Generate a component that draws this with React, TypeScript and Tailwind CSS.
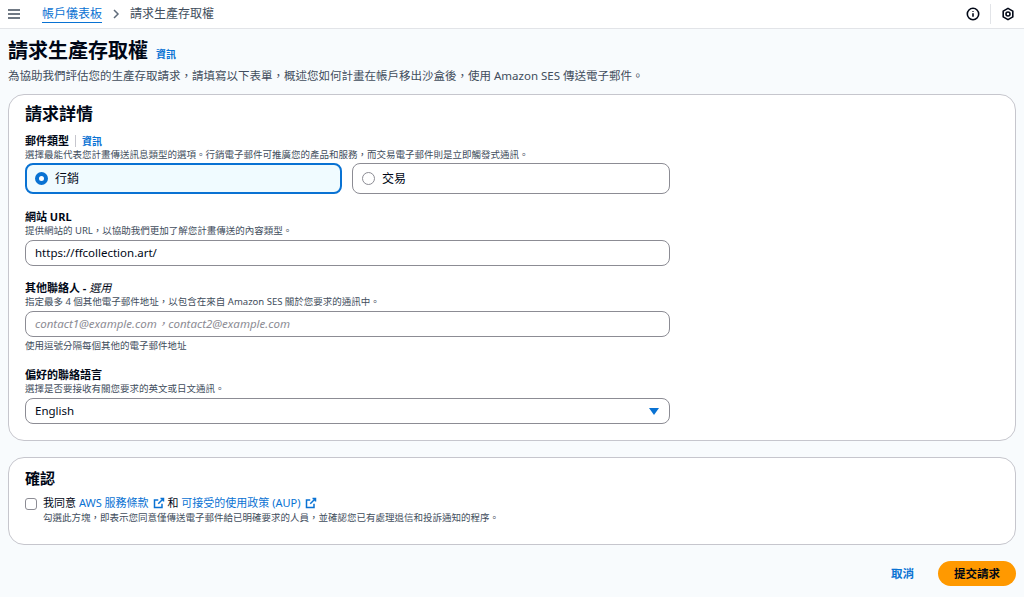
import React from "react";

const Ext = () => (
  <svg width="12" height="12" viewBox="0 0 16 16" className="inline-block ml-1 -mt-0.5" fill="none" stroke="#0972d3" strokeWidth="2">
    <path d="M10 2h4v4M14 2L7 9M12 9v5H2V4h5" />
  </svg>
);

export default function App() {
  return (
    <div className="w-[1024px] h-[597px] overflow-hidden bg-[#f8fbfd] text-[#000716]" style={{ fontFamily: '"Noto Sans","Noto Sans CJK TC",sans-serif' }}>
      <div className="h-[29px] bg-white border-b border-[#e2e4e8] flex items-center px-[8px]">
        <svg width="12" height="10" viewBox="0 0 12 10"><path d="M0 1h12M0 5h12M0 9h12" stroke="#414d5c" strokeWidth="1.6" /></svg>
        <span className="ml-[22px] text-[12px] text-[#0972d3] underline underline-offset-4">帳戶儀表板</span>
        <svg width="10" height="10" viewBox="0 0 10 10" className="mx-[9px]"><path d="M3 1l4 4-4 4" stroke="#5f6b7a" strokeWidth="1.5" fill="none" /></svg>
        <span className="text-[12px] text-[#414d5c]">請求生產存取權</span>
        <div className="ml-auto flex items-center">
          <svg width="14" height="14" viewBox="0 0 16 16" fill="none" stroke="#000716" strokeWidth="1.8"><circle cx="8" cy="8" r="6.5" /><path d="M8 7v4M8 4.5v.8" /></svg>
          <div className="w-px h-[20px] bg-[#e2e4e8] mx-[10px]" />
          <svg width="14" height="14" viewBox="0 0 16 16" fill="none" stroke="#000716" strokeWidth="1.8" className="mr-[1px]"><path d="M8 1.5l5.5 3.2v6.6L8 14.5l-5.5-3.2V4.7z" /><circle cx="8" cy="8" r="2.3" /></svg>
        </div>
      </div>
      <div className="px-[8px]">
        <div className="mt-[9px] flex items-baseline gap-[8px]">
          <h1 className="text-[20px] font-bold leading-[26px]">請求生產存取權</h1>
          <span className="text-[10px] font-bold text-[#0972d3]">資訊</span>
        </div>
        <p className="text-[11.5px] text-[#414d5c] mt-[4px] leading-[16px]">為協助我們評估您的生產存取請求，請填寫以下表單，概述您如何計畫在帳戶移出沙盒後，使用 Amazon SES 傳送電子郵件。</p>

        <div className="mt-[10px] h-[347px] bg-white border border-[#c6c6cd] rounded-[16px] px-[16px] pt-[8px]">
          <h2 className="text-[17px] font-bold leading-[22px]">請求詳情</h2>
          <div className="mt-[9px] flex items-center text-[11px] font-bold leading-[14px]">
            郵件類型<span className="mx-[6px] w-px h-[12px] bg-[#c6c6cd]" /><span className="text-[10px] text-[#0972d3]">資訊</span>
          </div>
          <p className="text-[9.5px] text-[#414d5c] leading-[13px]">選擇最能代表您計畫傳送訊息類型的選項。行銷電子郵件可推廣您的產品和服務，而交易電子郵件則是立即觸發式通訊。</p>
          <div className="flex gap-[10px] mt-[2px]">
            <div className="w-[317px] h-[31px] rounded-[8px] border-2 border-[#0972d3] bg-[#f0fbff] flex items-center px-[8px] gap-[7px] text-[12px]">
              <span className="w-[13px] h-[13px] rounded-full border-[4px] border-[#0972d3] bg-white" />行銷
            </div>
            <div className="w-[318px] h-[31px] rounded-[8px] border border-[#8c8c94] flex items-center px-[9px] gap-[7px] text-[12px]">
              <span className="w-[13px] h-[13px] rounded-full border border-[#8c8c94]" />交易
            </div>
          </div>

          <div className="mt-[16px] text-[11px] font-bold leading-[14px]">網站 URL</div>
          <p className="text-[9.5px] text-[#414d5c] leading-[13px]">提供網站的 URL，以協助我們更加了解您計畫傳送的內容類型。</p>
          <div className="mt-[3px] w-[645px] h-[26px] rounded-[8px] border border-[#8c8c94] flex items-center px-[9px] text-[11.5px]">https://ffcollection.art/</div>

          <div className="mt-[15px] text-[11px] font-bold leading-[14px]">其他聯絡人 - <i className="font-normal">選用</i></div>
          <p className="text-[9.5px] text-[#414d5c] leading-[13px]">指定最多 4 個其他電子郵件地址，以包含在來自 Amazon SES 關於您要求的通訊中。</p>
          <div className="mt-[3px] w-[645px] h-[26px] rounded-[8px] border border-[#8c8c94] flex items-center px-[9px] text-[11.5px] italic text-[#8c8c94]">contact1@example.com，contact2@example.com</div>
          <p className="mt-[2px] text-[9.5px] text-[#414d5c] leading-[13px]">使用逗號分隔每個其他的電子郵件地址</p>

          <div className="mt-[16px] text-[11px] font-bold leading-[14px]">偏好的聯絡語言</div>
          <p className="text-[9.5px] text-[#414d5c] leading-[13px]">選擇是否要接收有關您要求的英文或日文通訊。</p>
          <div className="mt-[3px] w-[645px] h-[26px] rounded-[8px] border border-[#8c8c94] flex items-center px-[9px] text-[11.5px]">
            English
            <svg width="10" height="7" viewBox="0 0 10 7" className="ml-auto mr-[1px]"><path d="M0 0h10L5 7z" fill="#0972d3" /></svg>
          </div>
        </div>

        <div className="mt-[16px] h-[88px] bg-white border border-[#c6c6cd] rounded-[16px] px-[16px] pt-[8px]">
          <h2 className="text-[15px] font-bold leading-[24px]">確認</h2>
          <div className="mt-[6px] flex gap-[6px]">
            <span className="mt-[2px] w-[12px] h-[12px] rounded-[3px] border border-[#8c8c94]" />
            <div>
              <div className="text-[11px] leading-[14px]">我同意 <span className="text-[#0972d3]">AWS 服務條款</span><Ext /> 和 <span className="text-[#0972d3]">可接受的使用政策 (AUP)</span><Ext /></div>
              <p className="text-[9.5px] text-[#414d5c] leading-[16px]">勾選此方塊，即表示您同意僅傳送電子郵件給已明確要求的人員，並確認您已有處理退信和投訴通知的程序。</p>
            </div>
          </div>
        </div>

        <div className="mt-[16px] flex justify-end items-center gap-[14px]">
          <span className="text-[11.5px] font-bold text-[#0972d3] px-[10px]">取消</span>
          <button className="h-[25px] w-[78px] rounded-full bg-[#ff9900] text-[11.5px] font-bold text-[#000716]">提交請求</button>
        </div>
      </div>
    </div>
  );
}
